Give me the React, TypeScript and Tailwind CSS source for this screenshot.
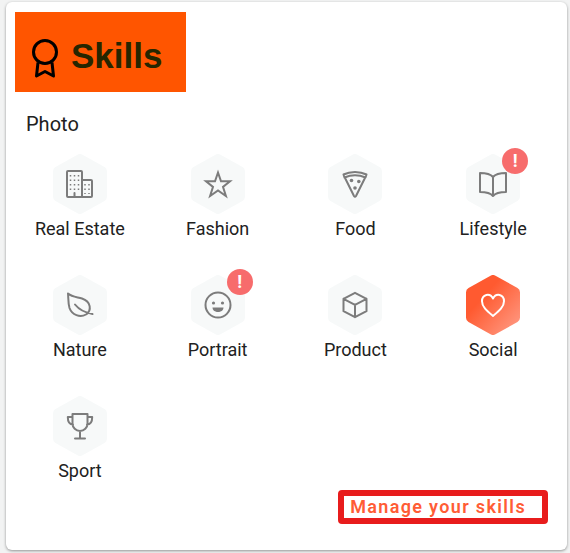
import type { ReactNode } from 'react';

type Skill = {
  name: string;
  icon: ReactNode;
  alert?: boolean;
  active?: boolean;
};

const skills: Skill[] = [
  {
    name: 'Real Estate',
    icon: (
      <>
        <rect x="2" y="2" width="15" height="26" rx="1" />
        <path d="M17 11h9a1 1 0 0 1 1 1v15a1 1 0 0 1-1 1h-9M9.500 24v4" />
        <path
          d="M5.500 6v18M9.500 6v18M13.500 6v18M20 15v10M24 15v10"
          strokeWidth="1.500"
          strokeDasharray="1.500 3"
          strokeLinecap="butt"
        />
      </>
    ),
  },
  {
    name: 'Fashion',
    icon: <path strokeLinejoin="miter" d="m15 3.500 3 8.800h9L20 17.900 22.900 27 15 21.500 7.100 27 10 17.900l-7-5.600h9z" />,
  },
  {
    name: 'Food',
    icon: (
      <>
        <path d="M3.500 5.500C10 2 20 2 26.500 5.500L25.500 8.500C19 5.700 11 5.700 4.500 8.500zM4.800 8.500 14 27q1 1.500 2 0l9.200-18.500" />
        <g fill="currentColor" stroke="none">
          <circle cx="11.500" cy="11.500" r="1.800" />
          <circle cx="18.800" cy="12.500" r="1.800" />
          <circle cx="15" cy="19" r="1.800" />
        </g>
      </>
    ),
  },
  {
    name: 'Lifestyle',
    alert: true,
    icon: <path d="M15 8C12.500 5 7 4 2 4v19c5 0 10.500 1 13 4 2.500-3 8-4 13-4V4c-5 0-10.500 1-13 4zM15 8v19" />,
  },
  {
    name: 'Nature',
    icon: <path d="M3 3.500C7 7 12 7 17 8.500c9 3 10 12 4 16C15 28 7 25 4.500 18 3 13 3.500 8 3 3.500zM10 14.500c4 5 9 8 17.500 9.500" />,
  },
  {
    name: 'Portrait',
    alert: true,
    icon: (
      <>
        <circle cx="15" cy="15" r="12.500" />
        <g fill="currentColor" stroke="none">
          <circle cx="10.500" cy="13" r="1.600" />
          <circle cx="19.500" cy="13" r="1.600" />
          <path d="M9.500 17.500h11c0 6-11 6-11 0z" />
        </g>
      </>
    ),
  },
  {
    name: 'Product',
    icon: <path d="M15 2.800 26.500 8.800v12.400L15 27.200 3.500 21.200V8.800zM3.500 8.800 15 14.800l11.500-6M15 14.800v12.400" />,
  },
  {
    name: 'Social',
    active: true,
    icon: <path d="M15 26C9 21 4 17 4 11.200 4 4 12 2.500 15 8.500 18 2.500 26 4 26 11.200 26 17 21 21 15 26z" />,
  },
  {
    name: 'Sport',
    icon: <path d="M7.500 3h15v9.500a7.500 7.500 0 0 1-15 0zM7.500 6H2.800c0 5 2 7.500 5.200 7.500M22.500 6h4.700c0 5-2 7.500-5.200 7.500M15 20v7.500M10 27.500h10" />,
  },
];

function SkillItem({ name, icon, alert, active }: Skill) {
  return (
    <li className="flex flex-col items-center">
      <div className="relative h-15 w-[54px]">
        <svg viewBox="0 0 54 60" className="h-15 w-[54px]" aria-hidden="true">
          <defs>
            <linearGradient id="active-skill" x1="0.2" y1="0.2" x2="0.9" y2="0.9">
              <stop offset="0.2" stopColor="#ff5a30" />
              <stop offset="1" stopColor="#ff957d" />
            </linearGradient>
          </defs>
          <path
            d="M24.500.700a5 5 0 0 1 5 0l22 12.300a5 5 0 0 1 2.500 4.300v25.400a5 5 0 0 1-2.500 4.300l-22 12.300a5 5 0 0 1-5 0L2.500 47A5 5 0 0 1 0 42.700V17.300A5 5 0 0 1 2.500 13z"
            fill={active ? 'url(#active-skill)' : '#f7f9f9'}
          />
          <svg
            x="12"
            y="15"
            width="30"
            height="30"
            viewBox="0 0 30 30"
            fill="none"
            stroke="currentColor"
            strokeWidth="2"
            strokeLinecap="round"
            strokeLinejoin="round"
            className={active ? 'text-white' : 'text-[#7c7c7c]'}
          >
            {icon}
          </svg>
        </svg>
        {alert && (
          <span className="absolute -top-[6px] -right-2 flex size-[26px] items-center justify-center rounded-full bg-[#f76c6c] text-lg leading-none font-bold text-white">
            !
          </span>
        )}
      </div>
      <span className="mt-[3px] text-lg leading-6">{name}</span>
    </li>
  );
}

export default function App() {
  return (
    <main className="bg-[#f2f3f3] pt-0.5 pr-[3px] pb-[3px] pl-1.5 font-['Roboto','Liberation_Sans',sans-serif] text-[#212121]">
      <section className="rounded-md bg-white px-[5px] pt-2.5 pb-[26px] shadow-[0_1px_3px_rgba(0,0,0,0.4)]">
        <header className="ml-1 flex h-20 w-fit items-center gap-3 bg-[#ff5500] pr-6 pl-4">
          <svg
            viewBox="0 0 28 40"
            className="mt-3.5 h-10 w-7"
            fill="none"
            stroke="black"
            strokeWidth="3"
            strokeLinejoin="round"
            aria-hidden="true"
          >
            <circle cx="14" cy="13" r="11.500" />
            <path d="M7 23.500 5.500 37l8.500-4.500 8.500 4.500L21 23.500" />
          </svg>
          <h1 className="mt-2 font-['Liberation_Sans',Arial,sans-serif] text-[35px] leading-10 font-bold text-[#262600]">Skills</h1>
        </header>
        <h2 className="mt-5 ml-[15px] text-xl leading-6">Photo</h2>
        <ul className="mt-[18px] grid grid-cols-4 gap-y-[34px]">
          {skills.map((skill) => (
            <SkillItem key={skill.name} {...skill} />
          ))}
        </ul>
        <div className="mt-[7px] mr-3.5 flex justify-end">
          <a
            href="#skills"
            className="rounded-sm border-6 border-[#e81c1c] py-px pr-4 pl-1.5 text-lg leading-5 font-semibold tracking-[0.075em] text-[#ff5c35]"
          >
            Manage your skills
          </a>
        </div>
      </section>
    </main>
  );
}
